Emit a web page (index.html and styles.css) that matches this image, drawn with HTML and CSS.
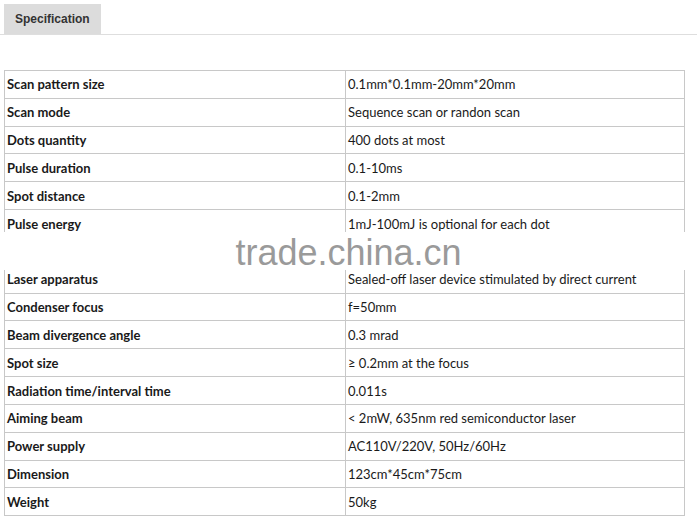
FILE: index.html
```html
<!DOCTYPE html>
<html>
<head>
<meta charset="utf-8">
<link rel="stylesheet" href="styles.css">
</head>
<body>
<div class="tabs"><div class="tab">Specification</div></div>
<div class="content">
<table class="spec">
<tr><td class="k">Scan pattern size</td><td class="v">0.1mm*0.1mm-20mm*20mm</td></tr>
<tr><td class="k">Scan mode</td><td class="v">Sequence scan or randon scan</td></tr>
<tr><td class="k">Dots quantity</td><td class="v">400 dots at most</td></tr>
<tr><td class="k">Pulse duration</td><td class="v">0.1-10ms</td></tr>
<tr><td class="k">Spot distance</td><td class="v">0.1-2mm</td></tr>
<tr><td class="k">Pulse energy</td><td class="v">1mJ-100mJ is optional for each dot</td></tr>
<tr><td class="k"></td><td class="v"></td></tr>
<tr><td class="k">Laser apparatus</td><td class="v">Sealed-off laser device stimulated by direct current</td></tr>
<tr><td class="k">Condenser focus</td><td class="v">f=50mm</td></tr>
<tr><td class="k">Beam divergence angle</td><td class="v">0.3 mrad</td></tr>
<tr><td class="k">Spot size</td><td class="v">≥ 0.2mm at the focus</td></tr>
<tr><td class="k">Radiation time/interval time</td><td class="v">0.011s</td></tr>
<tr><td class="k">Aiming beam</td><td class="v">&lt; 2mW, 635nm red semiconductor laser</td></tr>
<tr><td class="k">Power supply</td><td class="v">AC110V/220V, 50Hz/60Hz</td></tr>
<tr><td class="k">Dimension</td><td class="v">123cm*45cm*75cm</td></tr>
<tr><td class="k">Weight</td><td class="v">50kg</td></tr>
</table>
<div class="watermark">trade.china.cn</div>
</div>
</body>
</html>
```
FILE: styles.css
```css
html, body {
  margin: 0;
  padding: 0;
  background: #fff;
}
body {
  width: 697px;
  height: 525px;
  overflow: hidden;
  position: relative;
}
.tabs {
  display: flex;
  padding: 4px 0 0 4px;
  border-bottom: 1px solid #dedede;
}
.tab {
  background: #dcdcdc;
  height: 30px;
  line-height: 31px;
  padding: 0 11px;
  font-family: "Liberation Sans", Arial, sans-serif;
  font-size: 12px;
  font-weight: bold;
  color: #333;
}
.content {
  padding: 35px 0 0 4px;
}
.spec {
  border-collapse: collapse;
  width: 681px;
  table-layout: fixed;
  font-family: Lato, "Liberation Sans", sans-serif;
  font-size: 13px;
  color: #1a1a1a;
}
.spec tr {
  height: 27.83px;
}
.spec td {
  border: 1px solid #c8c8c8;
  padding: 0 2px;
  white-space: nowrap;
}
.spec td.k {
  width: 336px;
  font-weight: bold;
}
.watermark {
  position: absolute;
  left: 0;
  top: 232px;
  width: 697px;
  height: 36px;
  padding-top: 2px;
  background: #fff;
  text-align: center;
  font-family: "Liberation Sans", Arial, sans-serif;
  font-size: 36px;
  line-height: 38px;
  color: #9a9a9a;
}
```
